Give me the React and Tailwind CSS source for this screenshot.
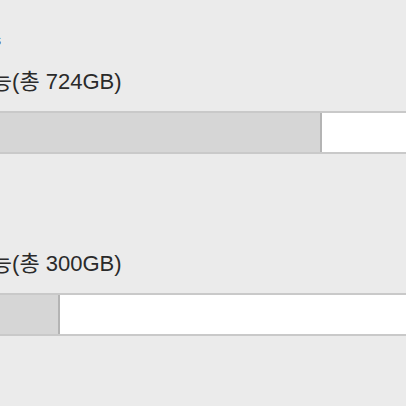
const font = { fontFamily: '"Liberation Sans", "Noto Sans CJK KR", sans-serif' };

function StorageBar({ label, used }) {
  return (
    <div className="flex flex-col">
      <div className="ml-[-75px] h-[30px] text-[22px] leading-[30px] text-[#2a2a2a] whitespace-nowrap">
        {label}
      </div>
      <div className="mt-[14px] flex h-[43px] w-full border-y-2 border-[#c9c9c9]">
        <div
          className="h-full bg-[#d6d6d6] border-r-2 border-[#b4b4b4]"
          style={{ width: used }}
        />
        <div className="h-full flex-1 bg-white" />
      </div>
    </div>
  );
}

export default function App() {
  return (
    <div className="h-[406px] w-[406px] overflow-hidden bg-[#ebebeb]" style={font}>
      <div className="mt-[33px] ml-[-6px] h-[15px] text-[14px] leading-[15px] text-[#444]">
        s
      </div>
      <div className="mt-[19px] flex flex-col gap-[95px]">
        <StorageBar label="사용 가능(총 724GB)" used="322px" />
        <StorageBar label="사용 가능(총 300GB)" used="60px" />
      </div>
    </div>
  );
}
